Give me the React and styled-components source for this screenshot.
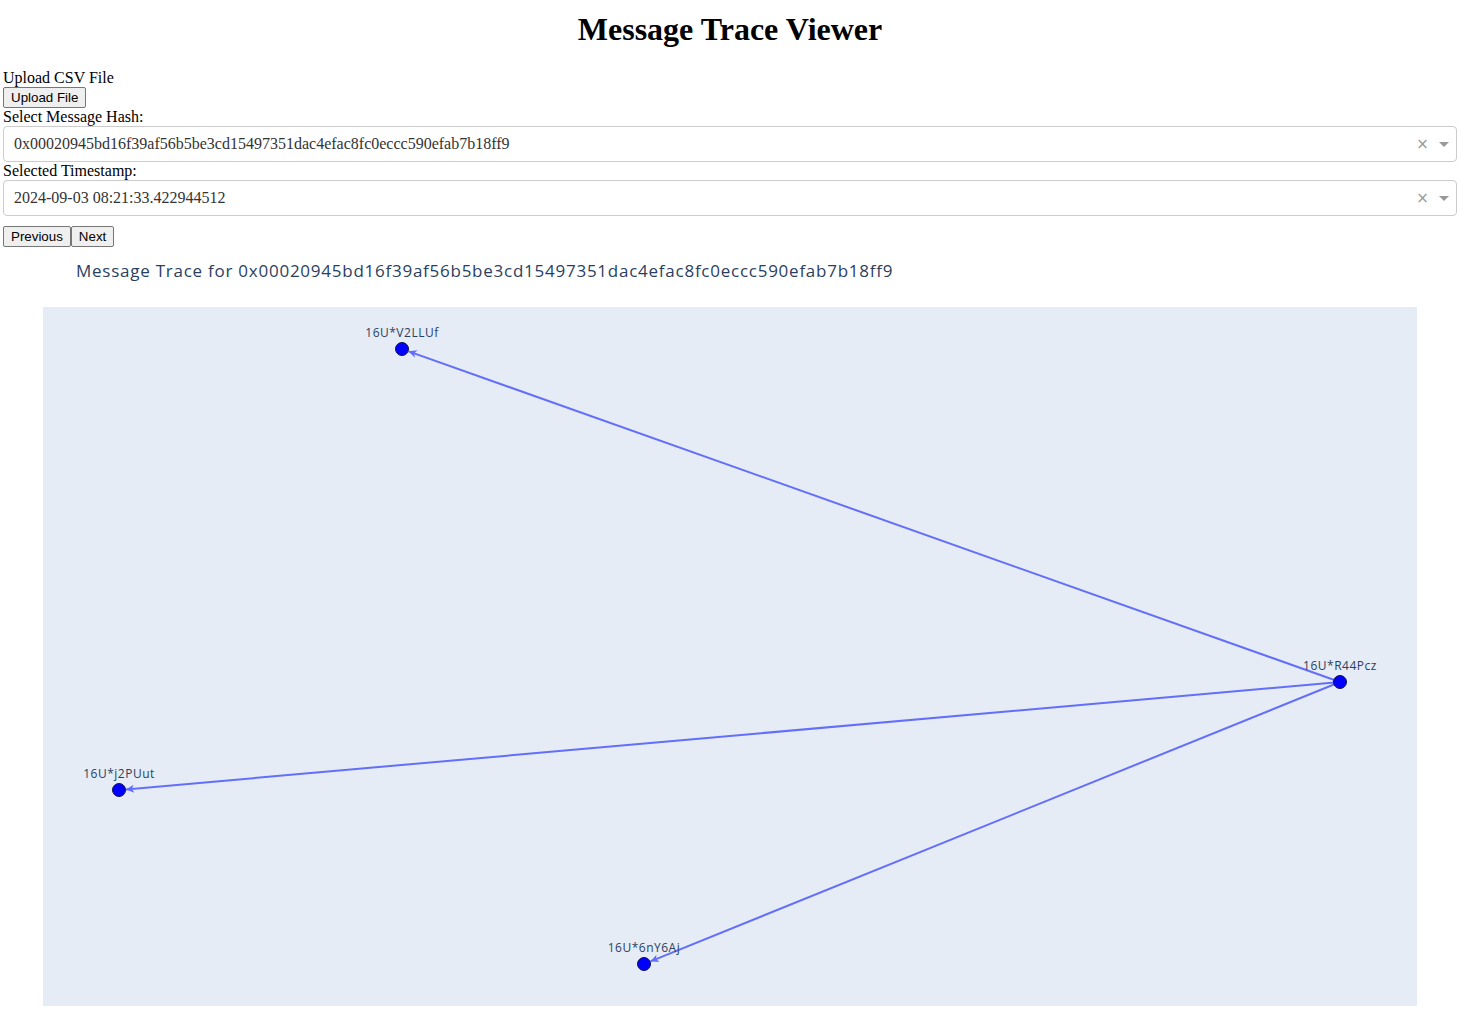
import React from 'react';
import styled, { createGlobalStyle } from 'styled-components';

const HASH = '0x00020945bd16f39af56b5be3cd15497351dac4efac8fc0eccc590efab7b18ff9';

const PLOT_W = 1374;
const PLOT_H = 699;

const NODES = {
    src: { x: 1297, y: 375, label: '16U*R44Pcz' },
    a: { x: 359, y: 42, label: '16U*V2LLUf' },
    b: { x: 76, y: 483, label: '16U*j2PUut' },
    c: { x: 601, y: 657, label: '16U*6nY6Aj' },
};

const EDGES = [
    ['src', 'a'],
    ['src', 'b'],
    ['src', 'c'],
];

const GlobalStyle = createGlobalStyle`
    html, body {
        margin: 0;
        background: #fff;
    }
    body {
        padding: 0 2px 0 3px;
        font-family: "Liberation Serif", "Times New Roman", serif;
        font-size: 16px;
        color: #000;
    }
`;

const Title = styled.h1`
    text-align: center;
    font-size: 32px;
    font-weight: 700;
    margin: 11px 0 21px;
    line-height: 37px;
`;

const Label = styled.div`
    line-height: 18px;
`;

const NativeButton = styled.button`
    font-family: "Liberation Sans", Arial, sans-serif;
    font-size: 13.33px;
    height: 21px;
    padding: 0 7px;
    margin: 0;
    color: #000;
    background: #efefef;
    border: 1px solid #767676;
    border-radius: 2px;
    line-height: 19px;
`;

const ButtonRow = styled.div`
    display: flex;
    margin-top: 10px;
`;

const Select = styled.div`
    display: flex;
    align-items: center;
    height: 34px;
    border: 1px solid #ccc;
    border-radius: 4px;
    padding: 0 0 0 10px;
    background: #fff;
`;

const SelectValue = styled.div`
    flex: 1;
    color: #333;
    font-size: 16px;
    white-space: nowrap;
    overflow: hidden;
`;

const Clear = styled.span`
    width: 17px;
    color: #999;
    font-family: "DejaVu Sans", sans-serif;
    font-size: 15px;
    text-align: center;
`;

const Caret = styled.span`
    width: 25px;
    display: flex;
    justify-content: center;
    align-items: center;

    &::after {
        content: '';
        border-style: solid;
        border-color: #999 transparent transparent;
        border-width: 5px 5px 2.5px;
        margin-top: 3px;
    }
`;

const Graph = styled.div`
    height: 771px;
`;

const GraphTitle = styled.div`
    height: 60px;
    padding-left: 73px;
    box-sizing: border-box;
    padding-top: 12px;
    font-family: "Open Sans", verdana, arial, sans-serif;
    font-size: 17px;
    letter-spacing: 0.75px;
    color: #2a3f5f;
    line-height: 24px;
`;

const PlotArea = styled.div`
    margin: 0 40px;
    height: ${PLOT_H}px;
    background: #e5ecf6;

    svg {
        display: block;
    }
`;

const NodeLabel = styled.text`
    font-family: "Open Sans", verdana, arial, sans-serif;
    font-size: 12px;
    letter-spacing: 0.5px;
    fill: #2a3f5f;
`;

function Dropdown({ value }) {
    return (
        <Select>
            <SelectValue>{value}</SelectValue>
            <Clear>×</Clear>
            <Caret />
        </Select>
    );
}

function Edge({ from, to }) {
    const dx = to.x - from.x;
    const dy = to.y - from.y;
    const len = Math.hypot(dx, dy);
    const ux = dx / len;
    const uy = dy / len;
    const tipX = to.x - ux * 7;
    const tipY = to.y - uy * 7;
    const baseX = tipX - ux * 8;
    const baseY = tipY - uy * 8;
    const px = -uy * 4;
    const py = ux * 4;
    return (
        <g>
            <line x1={from.x} y1={from.y} x2={tipX} y2={tipY} stroke="#636efa" strokeWidth="2" />
            <path
                d={`M${tipX},${tipY} L${baseX + px},${baseY + py} L${baseX + ux * 2},${baseY + uy * 2} L${baseX - px},${baseY - py} Z`}
                fill="#636efa"
            />
        </g>
    );
}

function TraceGraph() {
    return (
        <Graph>
            <GraphTitle>Message Trace for {HASH}</GraphTitle>
            <PlotArea>
                <svg width="100%" height={PLOT_H} viewBox={`0 0 ${PLOT_W} ${PLOT_H}`}>
                    {EDGES.map(([f, t]) => (
                        <Edge key={t} from={NODES[f]} to={NODES[t]} />
                    ))}
                    {Object.entries(NODES).map(([id, n]) => (
                        <g key={id}>
                            <NodeLabel x={n.x} y={n.y - 12} textAnchor="middle">
                                {n.label}
                            </NodeLabel>
                            <circle cx={n.x} cy={n.y} r="6.5" fill="#0000ff" stroke="#12124d" strokeWidth="1" />
                        </g>
                    ))}
                </svg>
            </PlotArea>
        </Graph>
    );
}

export default function App() {
    return (
        <>
            <GlobalStyle />
            <Title>Message Trace Viewer</Title>
            <Label>Upload CSV File</Label>
            <NativeButton>Upload File</NativeButton>
            <Label>Select Message Hash:</Label>
            <Dropdown value={HASH} />
            <Label>Selected Timestamp:</Label>
            <Dropdown value="2024-09-03 08:21:33.422944512" />
            <ButtonRow>
                <NativeButton>Previous</NativeButton>
                <NativeButton>Next</NativeButton>
            </ButtonRow>
            <TraceGraph />
        </>
    );
}
